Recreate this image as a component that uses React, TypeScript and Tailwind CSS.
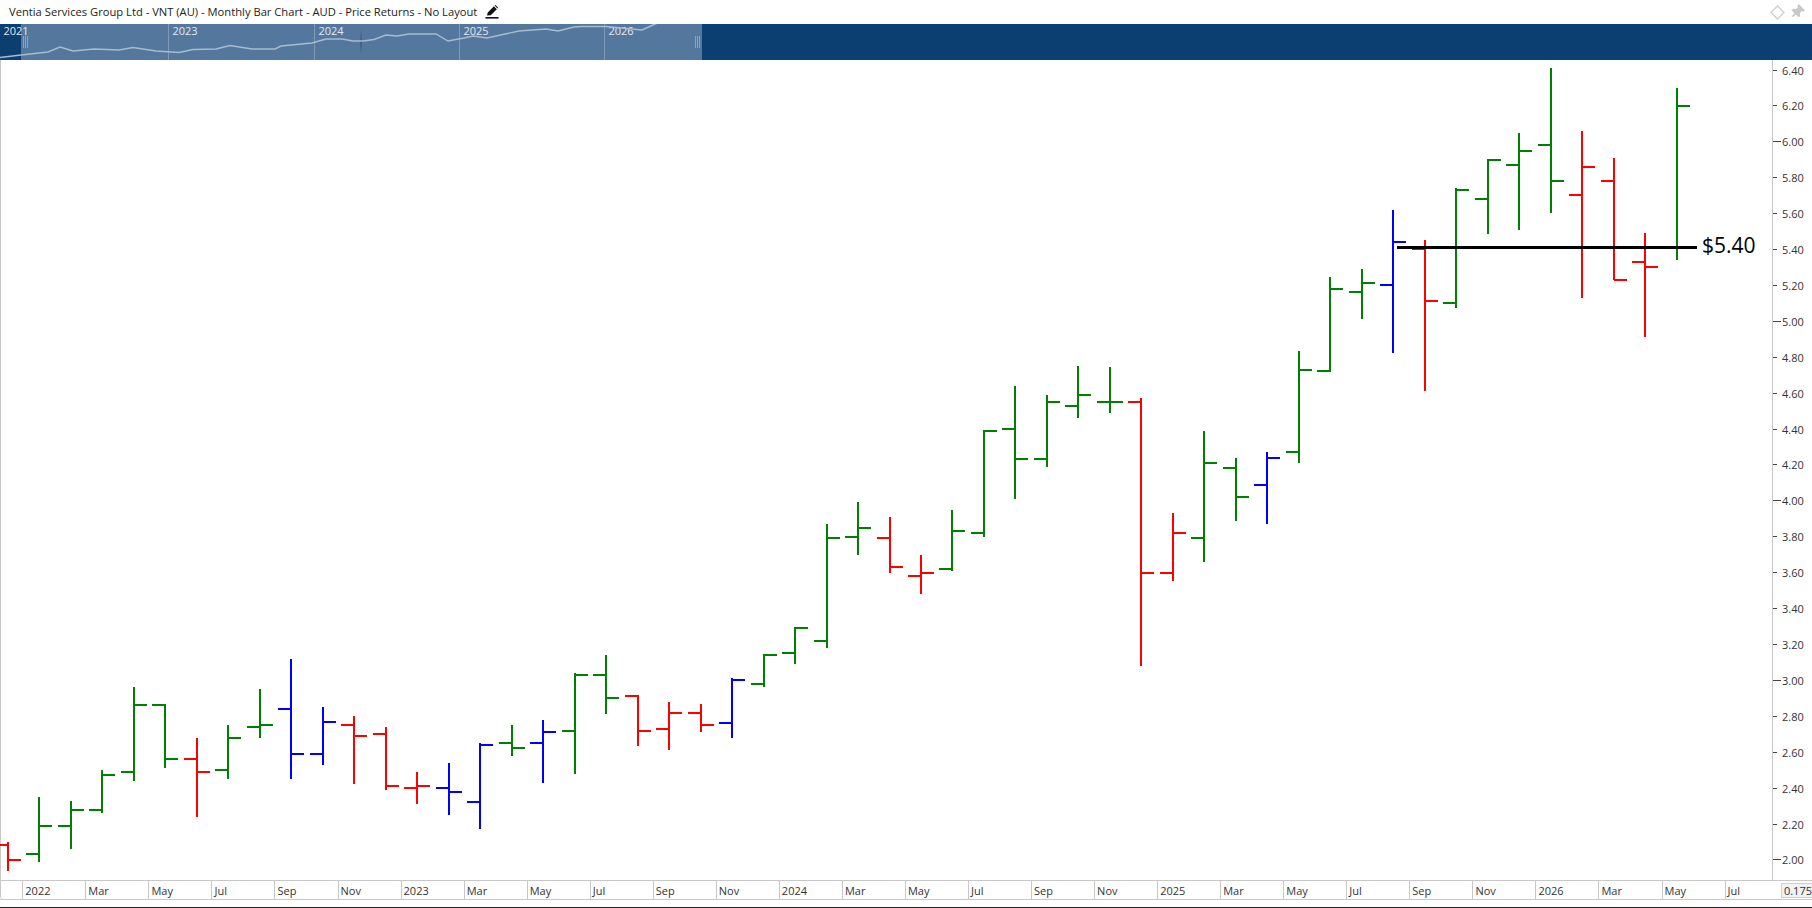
import React from "react";
import { FaThumbtack } from "react-icons/fa";

const G = "#008000";
const R = "#ff0000";
const B = "#0000ff";

// colour, open, high, low, close as pixel rows on the page
const bars: [string, number, number, number, number][] = [
  [R, 845, 842, 871, 860],
  [G, 854, 797, 862, 826],
  [G, 826, 801, 849, 810],
  [G, 810, 770, 813, 775],
  [G, 772, 687, 781, 705],
  [G, 705, 704, 768, 759],
  [R, 759, 738, 817, 772],
  [G, 770, 725, 779, 738],
  [G, 727, 689, 738, 725],
  [B, 709, 659, 779, 754],
  [B, 754, 707, 765, 722],
  [R, 725, 716, 784, 736],
  [R, 734, 727, 790, 786],
  [R, 788, 772, 804, 786],
  [B, 788, 763, 815, 792],
  [B, 802, 743, 829, 745],
  [G, 743, 725, 756, 748],
  [B, 743, 720, 783, 732],
  [G, 731, 673, 774, 675],
  [G, 675, 655, 714, 698],
  [R, 696, 695, 746, 731],
  [R, 729, 702, 750, 713],
  [R, 713, 704, 732, 725],
  [B, 723, 678, 738, 680],
  [G, 684, 654, 687, 655],
  [G, 653, 627, 664, 628],
  [G, 641, 524, 648, 538],
  [G, 537, 502, 555, 528],
  [R, 538, 517, 573, 567],
  [R, 576, 555, 594, 573],
  [G, 569, 510, 571, 531],
  [G, 533, 430, 537, 431],
  [G, 429, 386, 499, 459],
  [G, 459, 395, 467, 402],
  [G, 406, 366, 418, 395],
  [G, 402, 367, 413, 402],
  [R, 402, 398, 666, 573],
  [R, 573, 513, 581, 533],
  [G, 538, 431, 562, 463],
  [G, 468, 458, 521, 497],
  [B, 485, 452, 524, 458],
  [G, 452, 351, 463, 370],
  [G, 371, 277, 372, 289],
  [G, 292, 269, 319, 283],
  [B, 285, 210, 353, 242],
  [R, 249, 240, 391, 301],
  [G, 303, 188, 308, 190],
  [G, 199, 159, 234, 160],
  [G, 165, 133, 230, 151],
  [G, 145, 68, 213, 181],
  [R, 195, 131, 298, 167],
  [R, 181, 158, 280, 280],
  [R, 262, 233, 337, 267],
  [G, 247, 88, 260, 106],
];

const prices = ["6.40","6.20","6.00","5.80","5.60","5.40","5.20","5.00","4.80","4.60","4.40","4.20","4.00","3.80","3.60","3.40","3.20","3.00","2.80","2.60","2.40","2.20","2.00"];
const months = ["2022","Mar","May","Jul","Sep","Nov","2023","Mar","May","Jul","Sep","Nov","2024","Mar","May","Jul","Sep","Nov","2025","Mar","May","Jul","Sep","Nov","2026","Mar","May","Jul"];
const years: [string, string][] = [["2021", "w-[168px]"], ["2023", "w-[146px]"], ["2024", "w-[145px]"], ["2025", "w-[145px]"], ["2026", "w-[145px]"]];

const navLine = "0,57.5 21,55 48,52 60,47 73,51 94,49 119,50 133,47.5 156,51 179,52.5 193,49.5 216,49 230,45.5 252,49 275,49 281,46 312,43 326,39 342,39 353,41 363,41 374,39.5 386,35 397,36 409,34 436,34 448,41 464,38 473,36 487,38 505,34 519,31 546,29 558,31 574,27 581,26.5 606,26.5 642,30 653,25 660,22";

function Handle({ className }: { className: string }) {
  return (
    <div className={`absolute top-[12px] flex h-[12px] gap-[1px] ${className}`}>
      <div className="w-[1px] bg-[#8fa3b7]" />
      <div className="w-[1px] bg-[#8fa3b7]" />
      <div className="w-[1px] bg-[#8fa3b7]" />
    </div>
  );
}

export default function App() {
  return (
    <div className="flex h-[908px] w-[1812px] flex-col overflow-hidden bg-white font-['Open_Sans','Noto_Sans',sans-serif] text-[#333]">
      {/* Title */}
      <div className="flex h-[24px] items-center">
        <span className="ml-[9px] text-[11.2px] leading-none text-[#222]">
          Ventia Services Group Ltd - VNT (AU) - Monthly Bar Chart - AUD - Price Returns - No Layout
        </span>
        <svg className="ml-[8px]" width="14" height="14" viewBox="0 0 14 14">
          <path d="M2 10.6 L2.8 7.4 L8.9 1.3 L11.8 4.2 L5.7 10.2 Z" fill="#111" />
          <path d="M9.6 0.6 L10.4 0 L13 2.5 L12.4 3.4 Z" fill="#111" />
          <rect x="0.5" y="12" width="13" height="1.6" fill="#111" />
        </svg>
        <div className="ml-auto mr-[8px] flex items-center gap-[5px]">
          <svg width="15" height="15" viewBox="0 0 15 15">
            <path d="M7.5 1 L14 7.5 L7.5 14 L1 7.5 Z" fill="none" stroke="#d0d0d0" strokeWidth="1.4" />
          </svg>
          <FaThumbtack className="h-[14px] w-[14px] rotate-45 text-[#c8c8c8]" />
        </div>
      </div>

      {/* Navigator */}
      <div className="relative flex h-[36px] bg-[#0b3e71]">
        <div className="ml-[21px] w-[681px] bg-[#54789d]" />
        <div className="absolute left-0 top-0 flex h-full text-[11px] leading-none text-[#e3e9f0]">
          {years.map(([y, w], i) => (
            <div key={y} className={`h-full pl-[3.5px] pt-[1px] ${w} ${i === 0 ? "" : "border-l border-[#7e9ab6]"}`}>
              {y}
            </div>
          ))}
        </div>
        <svg className="absolute left-0 top-0" width="720" height="36" viewBox="0 24 720 36">
          <defs>
            <linearGradient id="tickfade" x1="0" y1="0" x2="0" y2="1">
              <stop offset="0" stopColor="#1b3550" stopOpacity="0" />
              <stop offset="0.5" stopColor="#1b3550" stopOpacity="0.75" />
              <stop offset="1" stopColor="#1b3550" stopOpacity="0" />
            </linearGradient>
          </defs>
          <rect x="360.5" y="29" width="1" height="26" fill="url(#tickfade)" />
          <polyline points={navLine} fill="none" stroke="#a9bbcd" strokeWidth="1.4" />
        </svg>
        <Handle className="left-[23px]" />
        <Handle className="left-[695px]" />
      </div>

      {/* Chart and price axis */}
      <div className="flex h-[820px]">
        <div className="relative h-full w-[1773px] border-l border-r border-[#c8c8c8]">
          <svg className="absolute left-[-1px] top-0" width="1772" height="820" viewBox="0 60 1772 820" shapeRendering="crispEdges">
            {bars.map(([c, o, h, l, cl], i) => {
              const x = Math.round(7.8 + 31.49 * i);
              return (
                <g key={i} fill={c}>
                  <rect x={x - 1} y={h} width={2} height={l - h} />
                  <rect x={x - 13} y={o - 1} width={13} height={2} />
                  <rect x={x} y={cl - 1} width={13} height={2} />
                </g>
              );
            })}
            <rect x={1397} y={246} width={300} height={3} fill="#000" />
          </svg>
          <div className="absolute left-[1701px] top-[173px] text-[21px] leading-[25px] text-black">$5.40</div>
        </div>
        <div className="-mt-[7.95px] flex h-fit flex-1 flex-col text-[11px] leading-none text-[#333]">
          {prices.map((p) => (
            <div key={p} className="flex h-[35.91px] items-center">
              <div className="w-[9px]">
                <div className={`h-px bg-[#444] ${p.endsWith(".00") ? "w-[8px]" : "w-[4px]"}`} />
              </div>
              <span>{p}</span>
            </div>
          ))}
        </div>
      </div>

      {/* Time axis */}
      <div className="flex h-[20px] border-y border-[#c8c8c8]">
        <div className="flex h-full w-[1782px] overflow-hidden rounded-bl-[3px] border-l border-[#c8c8c8]">
          <div className="w-[21.3px] shrink-0" />
          {months.map((m, i) => (
            <div key={i} className="flex h-full w-[63.05px] shrink-0 items-center border-l border-[#c8c8c8] pl-[2px] text-[11px] leading-none text-[#333]">
              {m}
            </div>
          ))}
        </div>
        <div className="ml-0 flex h-[15px] flex-1 items-center self-center border border-r-0 border-[#cfcfcf] bg-[#f2f2f2] pl-[2px] text-[11px] leading-none text-[#333]">
          0.175
        </div>
      </div>
      <div className="flex-1" />
      <div className="h-px bg-[#222]" />
    </div>
  );
}
